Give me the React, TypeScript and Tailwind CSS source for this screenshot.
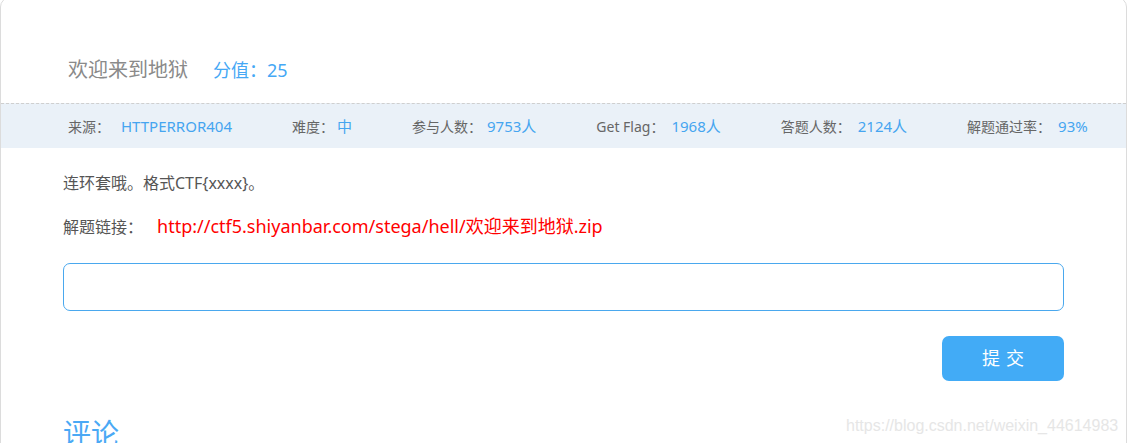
import React from 'react';

const stats = [
    { label: '来源：', value: 'HTTPERROR404', gap: 'ml-[11px]' },
    { label: '难度：', value: '中', gap: 'ml-[3px]' },
    { label: '参与人数：', value: '9753人', gap: 'ml-[5px]' },
    { label: 'Get Flag：', value: '1968人', gap: 'ml-[7px]' },
    { label: '答题人数：', value: '2124人', gap: 'ml-[7px]' },
    { label: '解题通过率：', value: '93%', gap: 'ml-[7px]' },
];

export default function App() {
    return (
        <div className="relative h-[443px] w-[1127px] overflow-hidden bg-white font-['Noto_Sans','Noto_Sans_CJK_SC',sans-serif]">
            <div className="-mt-[3px] h-[520px] rounded-[10px] border border-[#dcdcdc] bg-white">
                {/* Title */}
                <div className="flex items-center pl-[67px] pt-[58px] pb-[19px] leading-[28px]">
                    <span className="text-[20px] text-[#8a8a8a]">欢迎来到地狱</span>
                    <span className="ml-[25px] text-[18px] text-[#45a8f5]">分值：25</span>
                </div>

                {/* Stats bar */}
                <div className="flex h-[45px] items-center gap-[60px] border-t border-dashed border-[#cfcfcf] bg-[#eaf1f8] pl-[67px] text-[14px]">
                    {stats.map((s) => (
                        <div key={s.label} className="flex items-baseline whitespace-nowrap">
                            <span className="text-[#666]">{s.label}</span>
                            <span className={`${s.gap} text-[15px] text-[#45a5f0]`}>{s.value}</span>
                        </div>
                    ))}
                </div>

                {/* Body */}
                <div className="px-[62px] pt-[23px]">
                    <p className="text-[16px] leading-[24px] text-[#555]">连环套哦。格式CTF{'{xxxx}'}。</p>
                    <p className="mt-[19px] text-[16px] leading-[24px] text-[#555]">
                        解题链接：
                        <a className="ml-[14px] text-[18px] text-[#ff0000]">http://ctf5.shiyanbar.com/stega/hell/欢迎来到地狱.zip</a>
                    </p>
                    <input
                        type="text"
                        className="mt-[24px] block h-[48px] w-full rounded-[7px] border border-[#4aa8ee] px-3 outline-none"
                    />
                    <div className="mt-[25px] flex justify-end">
                        <button className="h-[45px] w-[122px] rounded-[7px] bg-[#42abf6] pl-[6px] text-[18px] tracking-[6px] text-white">
                            提交
                        </button>
                    </div>
                    <h2 className="mt-[32px] text-[28px] leading-[40px] text-[#4aa9f5]">评论</h2>
                </div>
            </div>

            {/* watermark */}
            <span className="absolute left-[846px] top-[414px] font-['Liberation_Sans',sans-serif] text-[16px] text-[#e6e6e6]">
                https://blog.csdn.net/weixin_44614983
            </span>
        </div>
    );
}
